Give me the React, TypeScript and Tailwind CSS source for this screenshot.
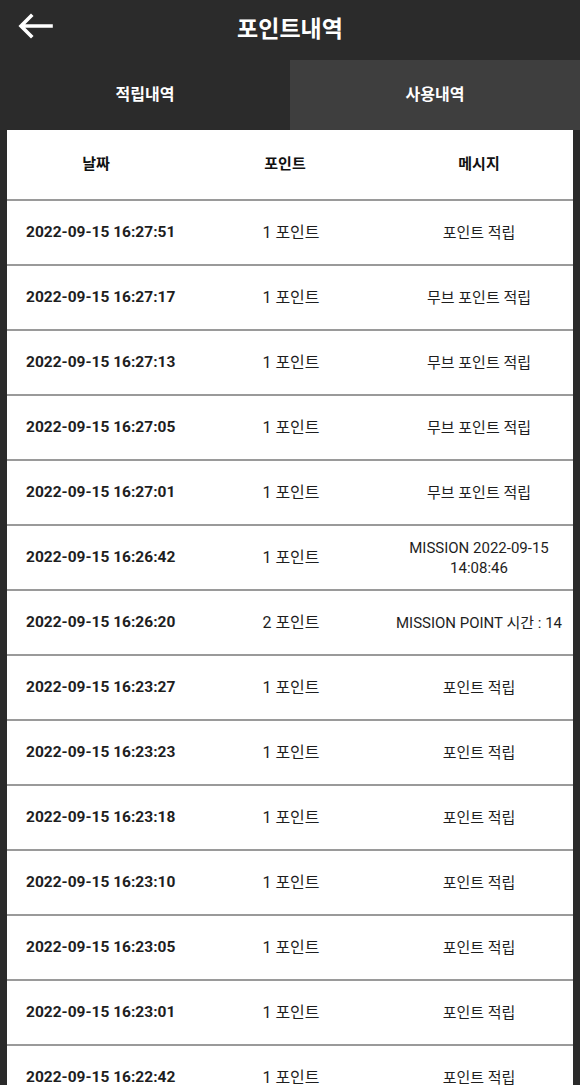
import React from "react";

const rows = [
    { date: "2022-09-15 16:27:51", point: "1 포인트", msg: "포인트 적립" },
    { date: "2022-09-15 16:27:17", point: "1 포인트", msg: "무브 포인트 적립" },
    { date: "2022-09-15 16:27:13", point: "1 포인트", msg: "무브 포인트 적립" },
    { date: "2022-09-15 16:27:05", point: "1 포인트", msg: "무브 포인트 적립" },
    { date: "2022-09-15 16:27:01", point: "1 포인트", msg: "무브 포인트 적립" },
    { date: "2022-09-15 16:26:42", point: "1 포인트", msg: "MISSION 2022-09-15 14:08:46" },
    { date: "2022-09-15 16:26:20", point: "2 포인트", msg: "MISSION POINT 시간 : 14" },
    { date: "2022-09-15 16:23:27", point: "1 포인트", msg: "포인트 적립" },
    { date: "2022-09-15 16:23:23", point: "1 포인트", msg: "포인트 적립" },
    { date: "2022-09-15 16:23:18", point: "1 포인트", msg: "포인트 적립" },
    { date: "2022-09-15 16:23:10", point: "1 포인트", msg: "포인트 적립" },
    { date: "2022-09-15 16:23:05", point: "1 포인트", msg: "포인트 적립" },
    { date: "2022-09-15 16:23:01", point: "1 포인트", msg: "포인트 적립" },
    { date: "2022-09-15 16:22:42", point: "1 포인트", msg: "포인트 적립" },
];

const font = "font-['Roboto','Noto_Sans_CJK_KR',sans-serif]";

const App = () => {
    return (
        <div className={`w-[580px] h-[1085px] overflow-hidden bg-[#2b2b2b] ${font}`}>
            {/* Top bar */}
            <div className="relative h-[60px] flex items-center justify-center">
                <button className="absolute left-[17px] top-[13px] w-[36px] h-[26px] flex items-center justify-center">
                    <svg width="36" height="26" viewBox="0 0 36 26" fill="none">
                        <path
                            d="M34 13H5M14 3L4 13l10 10"
                            stroke="#ffffff"
                            strokeWidth="3.6"
                            strokeLinecap="square"
                        />
                    </svg>
                </button>
                <h1 className="text-[23px] font-bold text-white">포인트내역</h1>
            </div>

            {/* Tabs */}
            <div className="grid grid-cols-2 h-[70px]">
                <div className="flex items-center justify-center text-white text-[16px] font-bold">
                    적립내역
                </div>
                <div className="flex items-center justify-center bg-[#3e3e3e] text-white text-[16px] font-bold">
                    사용내역
                </div>
            </div>

            {/* Table */}
            <div className="mx-[7px] bg-white">
                <div className="grid grid-cols-[178px_200px_188px] h-[71px] items-center border-b-2 border-[#9a9a9a] text-[15px] font-bold text-[#111]">
                    <div className="text-center">날짜</div>
                    <div className="text-center">포인트</div>
                    <div className="text-center">메시지</div>
                </div>
                {rows.map((r, idx) => (
                    <div
                        key={idx}
                        className="grid grid-cols-[178px_200px_188px] h-[65px] items-center border-b-2 border-[#9a9a9a] text-[#1e1e1e]"
                    >
                        <div className="pl-[19px] text-[15.5px] font-bold whitespace-nowrap">{r.date}</div>
                        <div className="text-center text-[16px] pl-[12px]">{r.point}</div>
                        <div className="text-center text-[15px] leading-[20px] px-[4px]">{r.msg}</div>
                    </div>
                ))}
            </div>
        </div>
    );
};

export default App;
